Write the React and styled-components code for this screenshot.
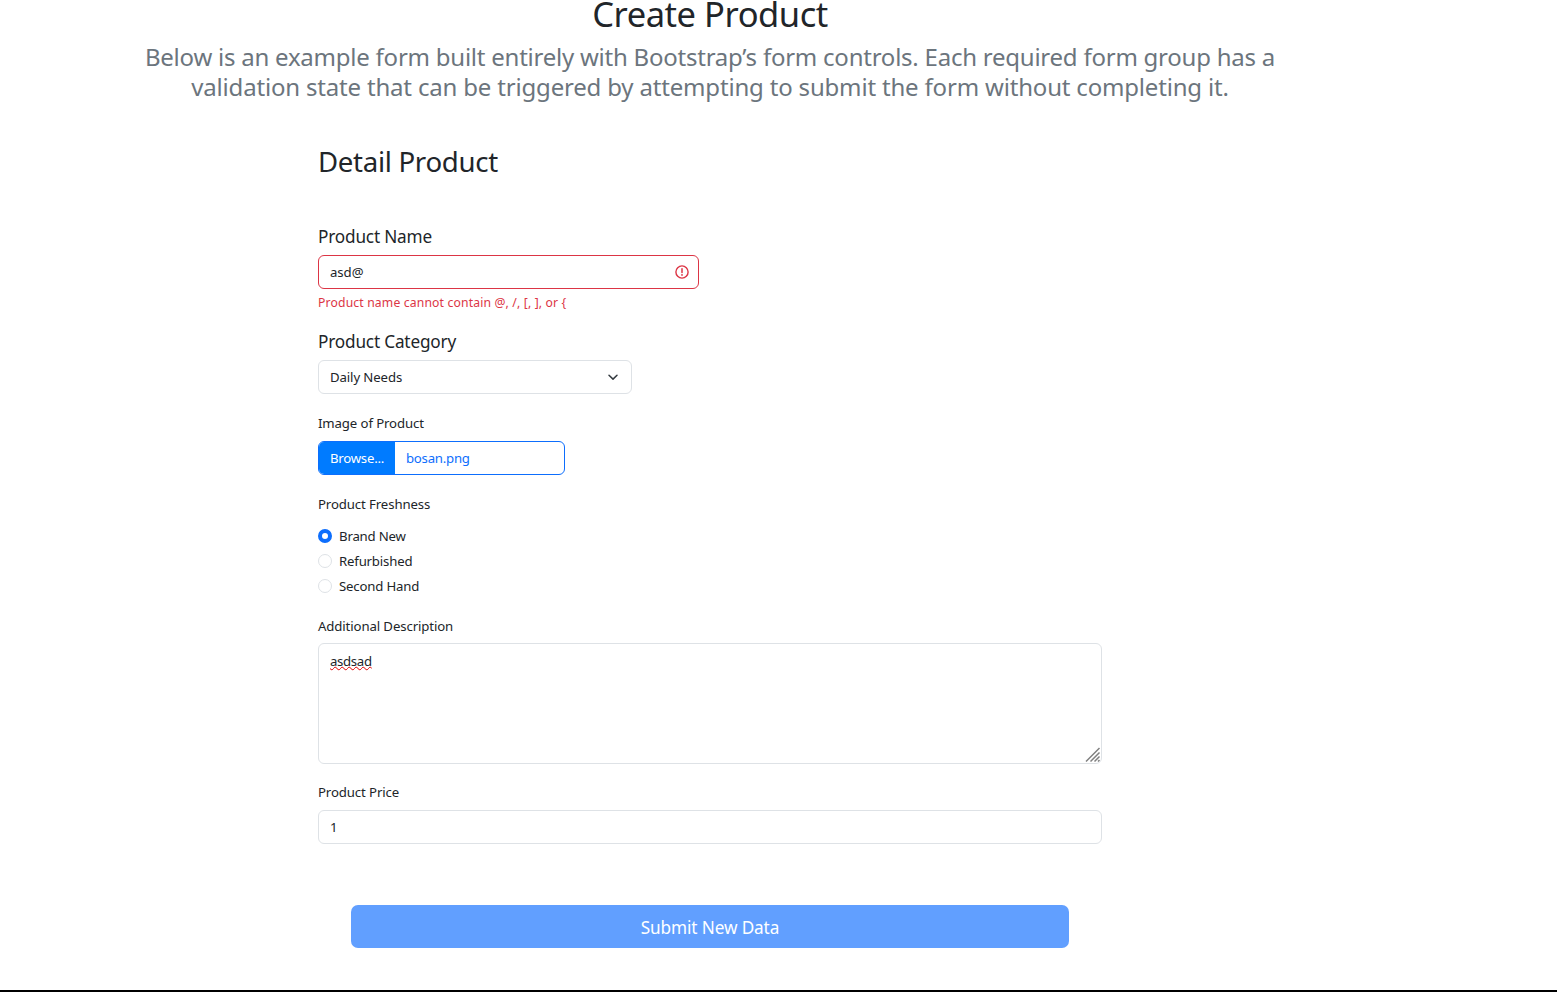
import React from "react";
import styled, { createGlobalStyle } from "styled-components";

const GlobalStyle = createGlobalStyle`
  *, *::before, *::after { box-sizing: border-box; }
  html, body { margin: 0; padding: 0; }
  body {
    background: #fff;
    color: #212529;
    font-family: "Noto Sans", "Open Sans", sans-serif;
    font-size: 13.2px;
    line-height: 22px;
  }
`;

const Page = styled.div`
  width: 100%;
  height: 992px;
  display: flex;
  flex-direction: column;
  border-bottom: 2px solid #000;
`;

const Container = styled.main`
  width: 1188px;
  margin-left: 116px;
  display: flex;
  flex-direction: column;
  align-items: center;
`;

const Title = styled.h1`
  margin: 0 0 15px;
  font-size: 34.5px;
  line-height: 27px;
  font-weight: 400;
  letter-spacing: -0.45px;
`;

const Lead = styled.p`
  margin: 0 0 42px;
  color: #6c757d;
  font-size: 24px;
  line-height: 30px;
  text-align: center;
`;

const LeadLine = styled.span`
  display: block;
  white-space: nowrap;
  letter-spacing: ${(p) => p.$track || 0}px;
`;

const Form = styled.form`
  width: 784px;
  display: flex;
  flex-direction: column;
  align-items: flex-start;
`;

const SectionTitle = styled.h2`
  margin: 0 0 46px;
  font-size: 27.6px;
  line-height: 34px;
  font-weight: 400;
  letter-spacing: -0.3px;
`;

const Field = styled.div`
  width: ${(p) => p.$width || "100%"};
  display: flex;
  flex-direction: column;
  margin-bottom: ${(p) => p.$gap || 0}px;
`;

const Label = styled.label`
  font-size: ${(p) => (p.$large ? "17.2px" : "13.2px")};
  line-height: ${(p) => (p.$large ? "26px" : "22px")};
  margin-bottom: ${(p) => p.$below ?? (p.$large ? 5 : 7)}px;
  letter-spacing: ${(p) => (p.$large ? "-0.18px" : "-0.11px")};
  white-space: nowrap;
`;

const Control = styled.div`
  height: 34px;
  display: flex;
  align-items: center;
  justify-content: space-between;
  padding: 0 ${(p) => p.$end || 11}px 0 11px;
  border: 1px solid ${(p) => (p.$invalid ? "#dc3545" : "#dee2e6")};
  border-radius: 6px;
  background: #fff;
`;

const TextInput = styled.input`
  flex: 1;
  min-width: 0;
  padding: 0;
  border: 0;
  outline: 0;
  background: transparent;
  color: #212529;
  font: inherit;
  letter-spacing: -0.05px;
`;

const Value = styled.span`
  letter-spacing: -0.11px;
`;

const Feedback = styled.div`
  margin-top: 4px;
  color: #dc3545;
  font-size: 12.2px;
  line-height: 20px;
  white-space: nowrap;
  letter-spacing: 0.15px;
`;

const FilePicker = styled.div`
  height: 34px;
  display: flex;
  border: 1px solid #0d6efd;
  border-radius: 6px;
  overflow: hidden;
  line-height: 32px;
  color: #0d6efd;
  letter-spacing: -0.24px;
`;

const BrowseButton = styled.span`
  width: 76px;
  padding-left: 11px;
  background: #007bff;
  color: #fff;
  white-space: nowrap;
`;

const FileName = styled.span`
  padding-left: 11px;
`;

const RadioRow = styled.label`
  height: 25px;
  display: flex;
  align-items: center;
  gap: 7px;
  letter-spacing: -0.18px;
`;

const Radio = styled.span`
  width: 14px;
  height: 14px;
  border-radius: 50%;
  border: ${(p) => (p.$checked ? "4px solid #0d6efd" : "1px solid #dee2e6")};
  background: #fff;
`;

const TextArea = styled.div`
  height: 121px;
  display: flex;
  justify-content: space-between;
  padding: 6px 0 0 11px;
  border: 1px solid #dee2e6;
  border-radius: 6px;
`;

const Misspelled = styled.span`
  text-decoration: underline wavy #e00000 1.3px;
  text-decoration-skip-ink: none;
  text-underline-offset: 0;
  letter-spacing: -0.32px;
`;

const ResizeGrip = styled.svg`
  align-self: flex-end;
  display: block;
`;

const SubmitButton = styled.button`
  align-self: center;
  width: 718px;
  height: 43px;
  padding: 2px 0 0;
  border: 0;
  border-radius: 7px;
  background: #619fff;
  color: #fff;
  font-family: inherit;
  font-size: 17.2px;
  line-height: 41px;
  letter-spacing: -0.12px;
`;

const ErrorIcon = () => (
  <svg width="14" height="14" viewBox="0 0 14 14" fill="none" stroke="#dc3545">
    <circle cx="7" cy="7" r="6.1" strokeWidth="1.4" />
    <path d="M7 3.8v3.6" strokeWidth="1.5" strokeLinecap="round" />
    <circle cx="7" cy="9.9" r="0.9" fill="#dc3545" stroke="none" />
  </svg>
);

const Chevron = () => (
  <svg width="14" height="14" viewBox="0 0 14 14" fill="none">
    <path d="m3 5.3 4 3.8 4-3.8" stroke="#343a40" strokeWidth="1.5" strokeLinecap="round" strokeLinejoin="round" />
  </svg>
);

const conditions = [
  { name: "Brand New", checked: true },
  { name: "Refurbished" },
  { name: "Second Hand" },
];

export default function App() {
  return (
    <>
      <GlobalStyle />
      <Page>
        <Container>
          <Title>Create Product</Title>
          <Lead>
            <LeadLine $track={-0.235}>Below is an example form built entirely with Bootstrap’s form controls. Each required form group has a</LeadLine>
            <LeadLine $track={-0.18}>validation state that can be triggered by attempting to submit the form without completing it.</LeadLine>
          </Lead>
          <Form>
            <SectionTitle>Detail Product</SectionTitle>
            <Field $width="381px" $gap={16}>
              <Label $large>Product Name</Label>
              <Control $invalid $end={9}>
                <TextInput defaultValue="asd@" />
                <ErrorIcon />
              </Control>
              <Feedback>Product name cannot contain @, /, [, ], or {"{"}</Feedback>
            </Field>
            <Field $width="314px" $gap={18}>
              <Label $large>Product Category</Label>
              <Control>
                <Value>Daily Needs</Value>
                <Chevron />
              </Control>
            </Field>
            <Field $width="247px" $gap={18}>
              <Label>Image of Product</Label>
              <FilePicker>
                <BrowseButton>Browse...</BrowseButton>
                <FileName>bosan.png</FileName>
              </FilePicker>
            </Field>
            <Field $gap={17}>
              <Label $below={8}>Product Freshness</Label>
              {conditions.map((c) => (
                <RadioRow key={c.name}>
                  <Radio $checked={c.checked} />
                  {c.name}
                </RadioRow>
              ))}
            </Field>
            <Field $gap={17}>
              <Label $below={6}>Additional Description</Label>
              <TextArea>
                <Misspelled>asdsad</Misspelled>
                <ResizeGrip width="16" height="16" viewBox="0 0 16 16" fill="none" stroke="#808080" strokeWidth="1.5">
                  <path d="M1 14.5 14.5 1M5.5 14.5l9-9M9.5 14.5l5-5M13 14.5l1.5-1.5" />
                </ResizeGrip>
              </TextArea>
            </Field>
            <Field $gap={61}>
              <Label>Product Price</Label>
              <Control>
                <TextInput defaultValue="1" />
              </Control>
            </Field>
            <SubmitButton type="button">Submit New Data</SubmitButton>
          </Form>
        </Container>
      </Page>
    </>
  );
}
